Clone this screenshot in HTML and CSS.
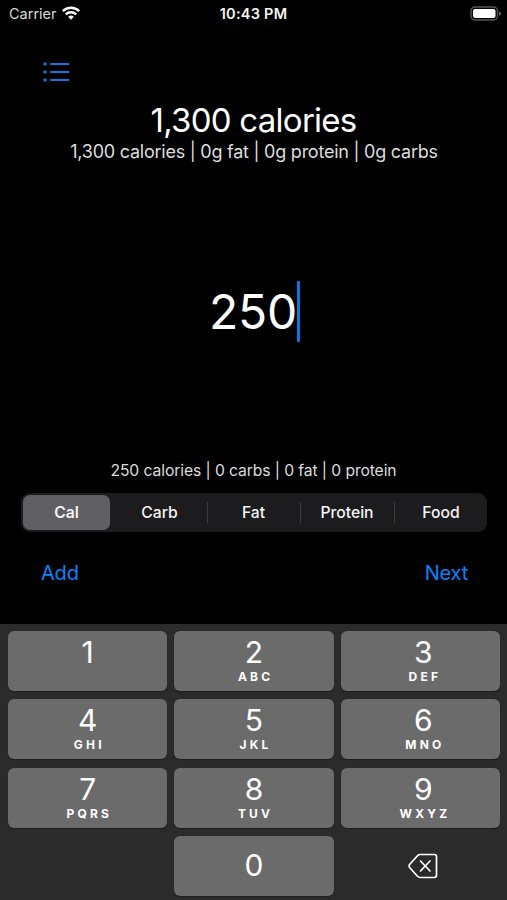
FILE: index.html
```html
<!DOCTYPE html>
<html lang="en">
<head>
<meta charset="utf-8">
<title>Calories</title>
<link rel="stylesheet" href="styles.css">
</head>
<body>
<div class="screen">
  <header class="status">
    <div class="status-left"><span class="carrier">Carrier</span>
      <svg class="wifi" width="18" height="14" viewBox="0 0 18 14" fill="none" stroke="#fff" stroke-width="2.4"><path d="M.8 5.1a11.7 11.7 0 0 1 16.4 0"/><path d="M3.8 8.400a7.400 7.400 0 0 1 10.400 0"/><path d="M9 13.800 6.100 10.800a4.200 4.200 0 0 1 5.800 0z" fill="#fff" stroke="none"/></svg>
    </div>
    <div class="clock">10:43 PM</div>
    <div class="status-right">
      <svg width="32" height="15" viewBox="0 0 32 15"><rect x="1" y="1" width="26.5" height="13" rx="4" fill="none" stroke="#57575a" stroke-width="1.4"/><rect x="3" y="3" width="22.5" height="9" rx="2" fill="#fff"/><path d="M29 5.2q2 .8 2 2.3t-2 2.3z" fill="#67676a"/></svg>
    </div>
  </header>
  <nav class="toolbar">
    <svg width="28" height="22" viewBox="0 0 28 22" stroke="#0a78e0" stroke-width="1.8" stroke-linecap="round"><path d="M8 3h17.500M8 11h17.500M8 19h17.500"/><path d="M2 3h.01M2 11h.01M2 19h.01" stroke-width="3.400"/></svg>
  </nav>
  <section class="summary">
    <h1>1,300 calories</h1>
    <p>1,300 calories | 0g fat | 0g protein | 0g carbs</p>
  </section>
  <section class="entry"><span class="amount">250</span><i class="caret"></i></section>
  <p class="totals">250 calories | 0 carbs | 0 fat | 0 protein</p>
  <div class="segments">
    <button class="seg selected">Cal</button>
    <button class="seg carb">Carb</button>
    <button class="seg divided">Fat</button>
    <button class="seg divided">Protein</button>
    <button class="seg divided food">Food</button>
  </div>
  <div class="actions"><a class="add">Add</a><a class="next">Next</a></div>
  <div class="keyboard">
    <button class="key">1</button>
    <button class="key">2<small>ABC</small></button>
    <button class="key right">3<small>DEF</small></button>
    <button class="key">4<small>GHI</small></button>
    <button class="key">5<small>JKL</small></button>
    <button class="key right">6<small>MNO</small></button>
    <button class="key">7<small>PQRS</small></button>
    <button class="key">8<small>TUV</small></button>
    <button class="key right">9<small>WXYZ</small></button>
    <span></span>
    <button class="key zero">0</button>
    <button class="delete right" aria-label="Delete">
      <svg width="30" height="26" viewBox="0 0 30 26" fill="none" stroke="#fff" stroke-width="1.7" stroke-linecap="round" stroke-linejoin="round"><path d="M12.200 1.500H26.300Q28.500 1.500 28.500 3.700V22.300Q28.500 24.500 26.300 24.500H12.200Q10.600 24.500 9.500 23.300L1.800 14.700Q.4 13 1.800 11.300L9.500 2.700Q10.600 1.500 12.200 1.500Z"/><path d="M12.500 8l9.500 10M22 8l-9.500 10"/></svg>
    </button>
  </div>
</div>
</body>
</html>
```
FILE: styles.css
```css
* { box-sizing: border-box; margin: 0; padding: 0; }
body { background: #000; color: #f5f5f5; font-family: Inter, "Liberation Sans", sans-serif; }
button { border: 0; background: none; color: inherit; font: inherit; }
svg { display: block; }
.screen { width: 507px; height: 900px; display: flex; flex-direction: column; overflow: hidden; }
.status { height: 28px; display: grid; grid-template-columns: 1fr auto 1fr; align-items: center; padding: 0 5px 1px 9px; font-size: 14.5px; }
.status-left { display: flex; align-items: center; gap: 5px; }
.carrier { color: #d8d8d8; }
.wifi { margin-top: -2px; }
.clock { font-weight: 600; font-size: 14.500px; letter-spacing: .25px; margin: 0 2px 0 -2px; }
.status-right { display: flex; justify-content: flex-end; }
.toolbar { height: 73px; padding: 33px 0 0 43px; }
.summary { height: 69px; text-align: center; }
.summary h1 { font-size: 33px; font-weight: 400; line-height: 38px; letter-spacing: -.74px; color: #fff; }
.summary p { font-size: 18px; line-height: 26px; letter-spacing: -.24px; padding-left: 1px; color: #ddd; }
.entry { height: 283px; display: flex; justify-content: center; align-items: center; }
.amount { font-size: 48px; line-height: 60px; letter-spacing: -.3px; padding-left: 2px; color: #fff; }
.caret { width: 3px; height: 61px; background: #0a78e0; border-radius: 1px; }
.totals { height: 40px; text-align: center; font-size: 15.700px; line-height: 36px; letter-spacing: -.1px; color: #ddd; }
.segments { height: 39px; margin: 0 20px 0 21px; padding: 2px; background: #1c1c1e; border-radius: 9px; display: grid; grid-template-columns: 92px 92px 93px 94px 1fr; }
.seg { font-size: 15.700px; font-weight: 500; position: relative; line-height: 34px; }
.selected { background: #5f5f64; border-radius: 7px; margin-right: 5px; font-weight: 600; }
.carb { padding-right: 3px; }
.food { padding-left: 3px; }
.divided::before { content: ""; position: absolute; left: 0; top: 7px; bottom: 7px; width: 1px; background: #3b3b3e; }
.actions { height: 92px; padding: 29px 39px 0 41px; display: flex; justify-content: space-between; font-size: 20px; line-height: 24px; letter-spacing: -.2px; color: #0a84ff; }
.keyboard { height: 276px; background: #2b2b2b; padding: 7px 7px 4px 8px; display: grid; grid-template-columns: repeat(3, 1fr); grid-template-rows: repeat(4, 1fr); column-gap: 7px; row-gap: 8.500px; }
.key { background: #6b6b6b; color: #fff; border-radius: 6px; box-shadow: 0 1px 1px #1d1d1d; display: flex; flex-direction: column; align-items: center; padding-top: 3px; font-size: 30px; line-height: 36px; }
.key small { font-size: 12px; line-height: 14px; font-weight: 700; letter-spacing: 3.200px; margin-right: -3.200px; }
.zero { padding-top: 11px; }
.delete { display: grid; place-items: center; }
.right { padding-left: 6px; }
```
